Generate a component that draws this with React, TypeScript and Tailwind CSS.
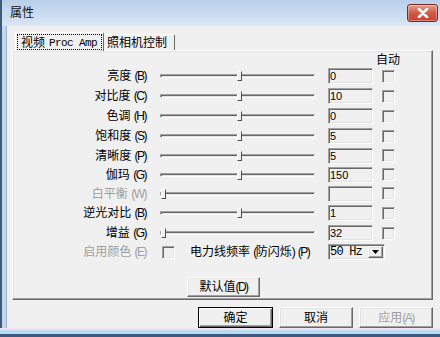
import React from "react";

const F = "font-['Liberation_Sans','Noto_Sans_CJK_SC',sans-serif]";
const sunken =
  "border border-t-[#a0a0a0] border-l-[#a0a0a0] border-r-white border-b-white shadow-[inset_1px_1px_0_#696969,inset_-1px_-1px_0_#e3e3e3]";
const raised =
  "border border-t-white border-l-white border-r-[#696969] border-b-[#696969] shadow-[inset_-1px_-1px_0_#a0a0a0,inset_1px_1px_0_#e3e3e3]";

function Mn({ k, dis }: { k: string; dis?: boolean }) {
  return (
    <span className={`text-[12px] tracking-[-1.5px] ${dis ? "text-[#a0a0a0]" : ""}`}>
      (<span>{k}</span>)
    </span>
  );
}

type Row = { label: string; m: string; val: string; thumb: number; h: string; dis?: boolean };

const rows: Row[] = [
  { label: "亮度", m: "B", val: "0", thumb: 77, h: "h-[20px]" },
  { label: "对比度", m: "C", val: "10", thumb: 77, h: "h-[20px]" },
  { label: "色调", m: "H", val: "0", thumb: 77, h: "h-[20px]" },
  { label: "饱和度", m: "S", val: "5", thumb: 77, h: "h-[20px]" },
  { label: "清晰度", m: "P", val: "5", thumb: 77, h: "h-[19px]" },
  { label: "伽玛", m: "G", val: "150", thumb: 77, h: "h-[19px]" },
  { label: "白平衡", m: "W", val: "", thumb: 1, h: "h-[19px]", dis: true },
  { label: "逆光对比", m: "B", val: "1", thumb: 77, h: "h-[20px]" },
  { label: "增益", m: "G", val: "32", thumb: 1, h: "h-[20px]" },
];

function Check() {
  return <div className={`w-[13px] h-[13px] bg-[#f0f0f0] ${sunken}`} />;
}

function Slider({ pos }: { pos: number }) {
  return (
    <div className="relative w-[155px] h-[12px] flex items-center">
      <div className={`w-full h-[4px] ${sunken}`} />
      <div
        className="absolute top-[1px] w-[5px] h-[10px] bg-[#f0f0f0] border border-t-white border-l-white border-r-[#505050] border-b-[#505050]"
        style={{ left: pos }}
      />
    </div>
  );
}

export default function App() {
  return (
    <div className={`w-[440px] h-[337px] flex flex-col overflow-hidden bg-[#c4d7ee] text-[12px] leading-[14px] text-black ${F}`}>
      {/* title bar */}
      <div className="h-[26px] shrink-0 flex items-center justify-between bg-gradient-to-b from-[#b9cfea] to-[#d9e6f5] border-l-2 border-[#3d5a7c]">
        <span className="pl-[8px] text-[12px] leading-[14px] text-[#111]">属性</span>
        <div className="w-[31px] h-[18px] mr-[2px] rounded-[3px] border border-[#7a2a22] bg-gradient-to-b from-[#e6a08f] via-[#cf5a45] to-[#c8432f] flex items-center justify-center shadow-[inset_0_0_0_1px_rgba(255,255,255,0.35)]">
          <svg width="12" height="10" viewBox="0 0 12 10">
            <path d="M2 1 L10 9 M10 1 L2 9" stroke="#fff" strokeWidth="2.6" strokeLinecap="round" />
          </svg>
        </div>
      </div>

      {/* body */}
      <div className="flex h-[302px] shrink-0">
        <div className="w-[7px] bg-[#c4d7ee] border-l-2 border-[#3d5a7c] border-r border-r-[#9fb4cc]" />
        <div className="flex-1 bg-[#f0f0f0] flex flex-col pt-[6px]">
          {/* tabs */}
          <div className="h-[18px] flex items-end pl-[8px]">
            <div className="relative z-10 h-[19px] mb-[-1px] w-[89px] shrink-0 bg-[#f0f0f0] border-t border-l border-white border-r border-r-[#696969] rounded-tl-[2px] rounded-tr-[2px] p-[1px]">
              <div className="h-full w-full border border-dotted border-black flex items-center pl-[3px] pt-[1px] whitespace-nowrap">
                <span>视频</span>
                <span className="ml-[4px] font-['Liberation_Mono',monospace] text-[11px] tracking-[-0.6px]">Proc Amp</span>
              </div>
            </div>
            <div className="h-[16px] w-[71px] shrink-0 border-t border-white border-r border-r-[#696969] rounded-tr-[2px] flex items-center pl-[3px] whitespace-nowrap">
              <span>照相机控制</span>
            </div>
          </div>

          {/* panel */}
          <div className={`ml-[5px] w-[421px] h-[250px] flex flex-col pt-[3px] bg-[#f0f0f0] ${raised}`}>
            <div className="h-[12px] pl-[363px] leading-[12px]">自动</div>
            {rows.map((r, i) => (
              <div key={i} className={`${r.h} flex items-center`}>
                <div className={`w-[133px] text-right whitespace-nowrap ${r.dis ? "text-[#a0a0a0]" : ""}`}>
                  {r.label} <Mn k={r.m} dis={r.dis} />
                </div>
                <div className="ml-[14px]">
                  <Slider pos={r.thumb} />
                </div>
                <div className={`ml-[13px] w-[45px] h-[16px] bg-[#f0f0f0] ${sunken} flex items-center pl-[1px] text-[11px] font-['Liberation_Sans',sans-serif]`}>
                  {r.val}
                </div>
                <div className="ml-[9px]">
                  <Check />
                </div>
              </div>
            ))}
            <div className="h-[18px] flex items-center">
              <div className="w-[133px] text-right whitespace-nowrap text-[#a0a0a0]">
                启用颜色 <Mn k="E" dis />
              </div>
              <div className="ml-[16px]">
                <Check />
              </div>
              <div className="ml-[15px] w-[138px] whitespace-nowrap">
                电力线频率 <span className="tracking-[-1.5px]">(</span>防闪烁<span className="tracking-[-1.5px]">)</span> <Mn k="P" />
              </div>
              <div className={`w-[57px] h-[16px] bg-[#f0f0f0] ${sunken} flex items-center justify-between pl-[1px] pr-[1px]`}>
                <span className="font-['Liberation_Mono',monospace] tracking-[-0.8px] text-[12px]">50 Hz</span>
                <div className={`w-[15px] h-[12px] bg-[#f0f0f0] ${raised} flex items-center justify-center`}>
                  <svg width="7" height="4" viewBox="0 0 7 4">
                    <path d="M0 0 H7 L3.5 4 Z" fill="#000" />
                  </svg>
                </div>
              </div>
            </div>
            <div className="mt-[16px] flex justify-center pl-[2px]">
              <div className={`w-[73px] h-[20px] ${raised} bg-[#f0f0f0] flex items-center justify-center`}>
                默认值 <Mn k="D" />
              </div>
            </div>
          </div>

          {/* buttons */}
          <div className="mt-[7px] h-[21px] flex justify-end gap-[6px] pr-[7px]">
            <div className="w-[75px] h-[21px] border border-[#000] bg-[#f0f0f0] shadow-[inset_1px_1px_0_#fff,inset_-1px_-1px_0_#696969,inset_-2px_-2px_0_#a0a0a0] flex items-center justify-center">
              确定
            </div>
            <div className={`w-[74px] h-[21px] ${raised} bg-[#f0f0f0] flex items-center justify-center`}>取消</div>
            <div className={`w-[74px] h-[21px] ${raised} bg-[#f0f0f0] flex items-center justify-center text-[#a0a0a0]`}>
              应用 <Mn k="A" dis />
            </div>
          </div>
        </div>
      </div>

      {/* bottom frame */}
      <div className="h-[9px] shrink-0 flex flex-col">
        <div className="h-[2px] bg-[#efe2ec]" />
        <div className="h-[4px] bg-[#b9daf2]" />
        <div className="h-[3px] bg-[#3d5a7c]" />
      </div>
    </div>
  );
}
